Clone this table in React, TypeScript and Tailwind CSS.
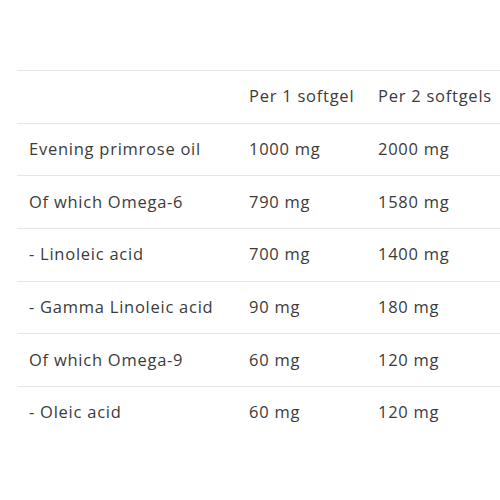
const rows = [
  ["Evening primrose oil", "1000 mg", "2000 mg"],
  ["Of which Omega-6", "790 mg", "1580 mg"],
  ["- Linoleic acid", "700 mg", "1400 mg"],
  ["- Gamma Linoleic acid", "90 mg", "180 mg"],
  ["Of which Omega-9", "60 mg", "120 mg"],
  ["- Oleic acid", "60 mg", "120 mg"],
];

function Row({ cells }: { cells: string[] }) {
  return (
    <div className="grid grid-cols-[220px_129px_160px] h-[52.67px] items-center border-t border-[#e6e6e6]">
      {cells.map((c, i) => (
        <div key={i} className="px-3 whitespace-nowrap">
          {c}
        </div>
      ))}
    </div>
  );
}

export default function App() {
  return (
    <div className="w-[500px] h-[500px] bg-white overflow-hidden pt-[70px] pl-[17px] text-[16.5px] tracking-[0.75px] text-[#3b3b3b] font-['Open_Sans',sans-serif]">
      <div className="w-[520px]">
        <Row cells={["", "Per 1 softgel", "Per 2 softgels"]} />
        {rows.map((r) => (
          <Row key={r[0]} cells={r} />
        ))}
      </div>
    </div>
  );
}
